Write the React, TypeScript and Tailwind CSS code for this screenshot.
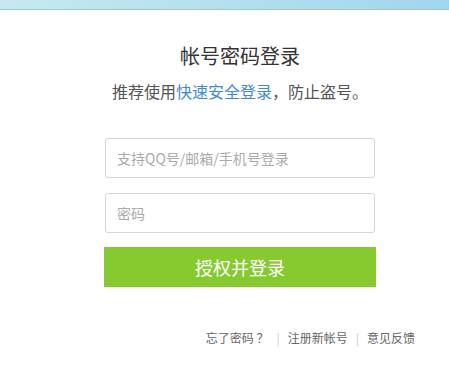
export default function App() {
  const font = { fontFamily: '"Microsoft YaHei", "Noto Sans CJK SC", sans-serif' };
  return (
    <div className="w-[449px] h-[382px] bg-white overflow-hidden" style={font}>
      {/* top strip */}
      <div className="h-[10px] bg-gradient-to-r from-[#c6e9ef] to-[#a0d6ef] border-b border-[#a3c6c9]" />

      <div className="w-[272px] ml-[104px]">
        <h1 className="mt-[35px] text-center text-[20px] leading-[22px] text-[#333]">帐号密码登录</h1>
        <p className="mt-[14px] text-center text-[16px] leading-[20px] text-[#555] whitespace-nowrap">
          推荐使用<a className="text-[#3f89d4]">快速安全登录</a>，防止盗号。
        </p>

        <div className="mt-[37px] flex flex-col">
          <div className="mx-[1px] h-[40px] border border-[#d6d6d6] rounded-[3px] flex items-center px-[11px] text-[14px] text-[#aaa]">
            支持QQ号/邮箱/手机号登录
          </div>
          <div className="mx-[1px] mt-[15px] h-[40px] border border-[#d6d6d6] rounded-[3px] flex items-center px-[11px] text-[14px] text-[#aaa]">
            密码
          </div>
          <button className="mt-[14px] h-[40px] w-full bg-[#86ca2f] text-white text-[18px]">授权并登录</button>
        </div>
      </div>

      <div className="mt-[43px] pr-[34px] flex justify-end items-center text-[12px] leading-[16px] text-[#666]">
        <span>忘了密码 ？</span>
        <span className="mx-[8px] text-[#ccc]">|</span>
        <span>注册新帐号</span>
        <span className="mx-[8px] text-[#ccc]">|</span>
        <span>意见反馈</span>
      </div>
    </div>
  );
}
